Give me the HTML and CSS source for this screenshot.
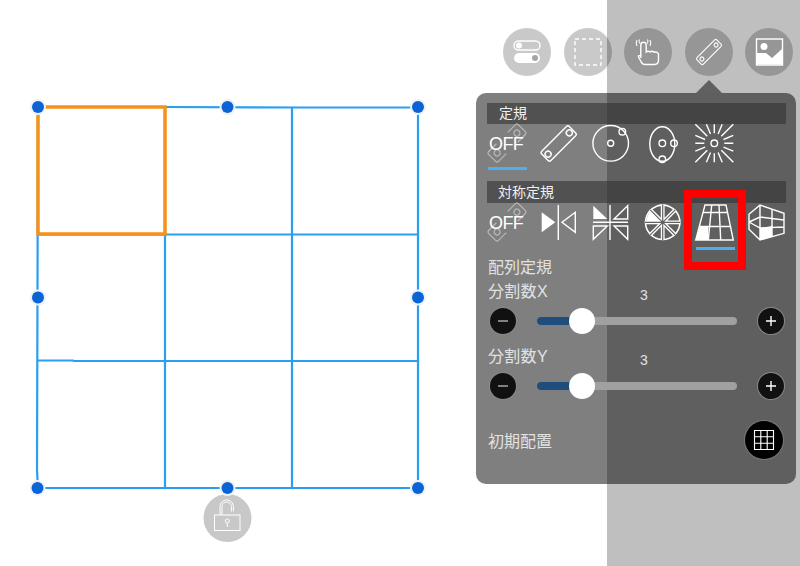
FILE: index.html
```html
<!DOCTYPE html>
<html lang="ja">
<head>
    <meta charset="UTF-8">
    <meta name="viewport" content="width=device-width, initial-scale=1.0">
    <title>対称定規</title>
    <link rel="stylesheet" href="styles.css">
</head>
<body>
    <div class="stage">
        <!-- 左: キャンバス -->
        <svg class="canvas" width="476" height="566" viewBox="0 0 476 566">
            <g class="grid">
                <path d="M38 107H165M165 107L302 107.500H418V488H38L37 470L38 107"/>
                <path d="M165 107V488M292 108V488"/>
                <path d="M38 234.500H418M38 360.500H73L74 361H418"/>
            </g>
            <rect class="cell-sel" x="38" y="107" width="127" height="127"/>
            <circle class="lock-btn" cx="227.500" cy="518" r="24"/>
            <g class="lock">
                <rect x="214.500" y="515" width="25.500" height="15.500"/>
                <path d="M220 515V506.500a6.700 6.500 0 0 1 13.400 0V511.500M222 515V506.500a4.700 4.500 0 0 1 9.400 0V511.500"/>
                <circle cx="227.300" cy="521" r="2"/>
                <path d="M227.300 523V527"/>
            </g>
            <g class="handles">
                <circle cx="38" cy="107" r="6"/>
                <circle cx="227.500" cy="107" r="6"/>
                <circle cx="418" cy="107" r="6"/>
                <circle cx="38" cy="297.500" r="6"/>
                <circle cx="418" cy="297.500" r="6"/>
                <circle cx="37.500" cy="488" r="6"/>
                <circle cx="227.500" cy="488" r="6"/>
                <circle cx="418" cy="488" r="6"/>
            </g>
        </svg>

        <!-- 右: ツールとパネル -->
        <div class="side">
            <div class="tools">
                <div class="tool">
                    <svg width="48" height="48" viewBox="0 0 48 48">
                        <rect class="ln" x="11" y="13" width="26" height="9" rx="4.500"/>
                        <circle class="wh" cx="16" cy="17.500" r="3"/>
                        <rect class="wh" x="11" y="25" width="26" height="10" rx="5"/>
                        <circle class="dim" cx="32" cy="30" r="3"/>
                    </svg>
                </div>
                <div class="tool">
                    <svg width="48" height="48" viewBox="0 0 48 48">
                        <rect class="ln dash" x="11" y="11" width="26" height="26"/>
                    </svg>
                </div>
                <div class="tool">
                    <svg width="48" height="48" viewBox="0 0 48 48">
                        <path class="ln" d="M16.800 30V17a2.700 2.700 0 0 1 5.400 0V24q2-1.500 4 0q2-1.500 4 .3q2.500-1 4.300 1.500V32q0 4.500-4 4.500H21q-3 0-4-3L14.500 29q-.5-2 2.300-1"/>
                        <path class="ln thin" d="M13 12q-1.500 3 0 6M15.500 11.500q-1 2 0 4M26 12q1.500 3 0 6M23.500 11.500q1 2 0 4"/>
                    </svg>
                </div>
                <div class="tool">
                    <svg width="48" height="48" viewBox="0 0 48 48">
                        <g transform="rotate(-45 24 24)">
                            <rect class="ln thin" x="10" y="19.500" width="28" height="9" rx="1.500"/>
                            <circle class="ln thin" cx="14" cy="24" r="2"/>
                            <circle class="ln thin" cx="34" cy="24" r="2"/>
                        </g>
                    </svg>
                </div>
                <div class="tool">
                    <svg width="48" height="48" viewBox="0 0 48 48">
                        <rect class="ln" x="11.500" y="11" width="26" height="26"/>
                        <circle class="wh" cx="19" cy="18.500" r="3.500"/>
                        <path class="wh" d="M12 25H21L27 30L37 21V36.500H12Z"/>
                    </svg>
                </div>
            </div>

            <div class="panel">
                <div class="head">定規</div>
                <div class="icons">
                    <div class="cell">
                        <svg class="icon" width="52" height="42" viewBox="481 125 52 42">
                            <g class="ghost" transform="translate(507 143) rotate(-45)">
                                <path d="M8-7H19a2 2 0 0 1 2 2V5a2 2 0 0 1-2 2H8M-8 7H-19a2 2 0 0 1-2-2V-5a2 2 0 0 1 2-2H-8"/>
                                <circle cx="14" cy="0" r="3"/>
                                <circle cx="-14" cy="0" r="3"/>
                            </g>
                            <text class="off" x="489" y="150">OFF</text>
                        </svg>
                        <i class="under"></i>
                    </div>
                    <div class="cell">
                        <svg class="icon" width="52" height="42" viewBox="533 125 52 42">
                            <g transform="rotate(-45 558.700 143.500)">
                                <rect class="ln" x="539.200" y="137" width="39" height="13" rx="2"/>
                                <circle class="ln" cx="543.700" cy="143.500" r="3"/>
                                <circle class="ln" cx="573.700" cy="143.500" r="3"/>
                            </g>
                        </svg>
                    </div>
                    <div class="cell">
                        <svg class="icon" width="52" height="42" viewBox="585 125 52 42">
                            <circle class="ln" cx="610.700" cy="143.300" r="17.800"/>
                            <circle class="ln" cx="610.700" cy="143.300" r="3"/>
                            <circle class="ln" cx="622.300" cy="131.700" r="3.300"/>
                        </svg>
                    </div>
                    <div class="cell">
                        <svg class="icon" width="52" height="42" viewBox="637 125 52 42">
                            <ellipse class="ln" cx="662.300" cy="144" rx="12.500" ry="17.300"/>
                            <circle class="ln" cx="662.300" cy="143.300" r="3.300"/>
                            <circle class="ln" cx="674" cy="143.300" r="3.300"/>
                            <circle class="ln" cx="662.300" cy="159.300" r="3.300"/>
                        </svg>
                    </div>
                    <div class="cell">
                        <svg class="icon" width="52" height="42" viewBox="689 125 52 42">
                            <circle class="ln" cx="714.300" cy="143.300" r="3.300"/>
                            <g class="ln" transform="translate(714.300 143.300)">
                                <path d="M10 0H19M-10 0H-19M0 10V19M0-10V-19"/>
                                <path d="M7 7L19 19M-7 7L-19 19M7-7L19-19M-7-7L-19-19"/>
                                <path d="M9.200 3.800L19 7.900M-9.200 3.800L-19 7.900M9.200-3.800L19-7.900M-9.200-3.800L-19-7.900"/>
                                <path d="M3.800 9.200L7.900 19M-3.800 9.200L-7.900 19M3.800-9.200L7.900-19M-3.800-9.200L-7.900-19"/>
                            </g>
                        </svg>
                    </div>
                </div>

                <div class="head head2">対称定規</div>
                <div class="icons icons2">
                    <div class="cell">
                        <svg class="icon" width="52" height="44" viewBox="481 203 52 44">
                            <g class="ghost" transform="translate(507 222) rotate(-45)">
                                <path d="M8-7H19a2 2 0 0 1 2 2V5a2 2 0 0 1-2 2H8M-8 7H-19a2 2 0 0 1-2-2V-5a2 2 0 0 1 2-2H-8"/>
                                <circle cx="14" cy="0" r="3"/>
                                <circle cx="-14" cy="0" r="3"/>
                            </g>
                            <text class="off" x="489" y="229">OFF</text>
                        </svg>
                    </div>
                    <div class="cell">
                        <svg class="icon" width="52" height="44" viewBox="533 203 52 44">
                            <path class="wh" d="M541.700 212.300V232.300L555.300 222.300Z"/>
                            <path class="ln" d="M558.300 205V240M575.300 212.300V232.300L562 222.300Z"/>
                        </svg>
                    </div>
                    <div class="cell">
                        <svg class="icon" width="52" height="44" viewBox="585 203 52 44">
                            <path class="wh" d="M593.300 205.700V219H607.300Z"/>
                            <path class="ln" d="M610 205V240M593 222.300H628M627.700 205.700V219H614ZM593.300 226V239.300L607.300 226ZM627.700 226V239.300L614 226Z"/>
                        </svg>
                    </div>
                    <div class="cell">
                        <svg class="icon" width="52" height="44" viewBox="637 203 52 44">
                            <circle class="wh" cx="662.700" cy="222.300" r="18"/>
                            <circle class="hole" cx="662.700" cy="222.300" r="16.400"/>
                            <path class="wh" d="M662.700 222.300H646.300A16.400 16.400 0 0 1 651.100 210.700Z"/>
                            <path class="spoke" d="M645 222.300H680.400M662.700 204.600V240M650.200 209.800L675.200 234.800M650.200 234.800L675.200 209.800"/>
                            <path class="spoke-in" d="M645 222.300H680.400M662.700 204.600V240M650.200 209.800L675.200 234.800M650.200 234.800L675.200 209.800"/>
                        </svg>
                    </div>
                    <div class="cell">
                        <svg class="icon" width="52" height="44" viewBox="689 203 52 44">
                            <path class="wh" d="M699.900 226.500H708.300V240H695.700Z"/>
                            <path class="ln" d="M705 205H726L733.300 240H695.700ZM711.700 205L708.300 240M719 205L720.700 240M703 212.500H728M699.900 226.500H731"/>
                        </svg>
                        <i class="under"></i>
                        <div class="mark"></div>
                    </div>
                    <div class="cell">
                        <svg class="icon" width="52" height="44" viewBox="741 203 52 44">
                            <path class="wh" d="M760 228L772 226V236.500L760 240Z"/>
                            <path class="ln" d="M749 214.300L760 205L784 213.300V233.300L760 240L749 229.300ZM760 205V240M772 209.500V236.500M749 222L760 217L784 220M749 222L760 228L784 227"/>
                        </svg>
                    </div>
                </div>

                <div class="sect">配列定規</div>

                <div class="label">
                    <span class="name">分割数X</span>
                    <span class="val">3</span>
                </div>
                <div class="slider">
                    <div class="round">
                        <svg width="26" height="26" viewBox="0 0 26 26"><path class="ln minus" d="M8 13H18"/></svg>
                    </div>
                    <div class="track">
                        <div class="fill" style="width: 45px"><i class="knob"></i></div>
                    </div>
                    <div class="round">
                        <svg width="26" height="26" viewBox="0 0 26 26"><path class="ln" d="M8 13H18M13 8V18"/></svg>
                    </div>
                </div>

                <div class="label label2">
                    <span class="name">分割数Y</span>
                    <span class="val">3</span>
                </div>
                <div class="slider">
                    <div class="round">
                        <svg width="26" height="26" viewBox="0 0 26 26"><path class="ln minus" d="M8 13H18"/></svg>
                    </div>
                    <div class="track">
                        <div class="fill" style="width: 45px"><i class="knob"></i></div>
                    </div>
                    <div class="round">
                        <svg width="26" height="26" viewBox="0 0 26 26"><path class="ln" d="M8 13H18M13 8V18"/></svg>
                    </div>
                </div>

                <div class="init">
                    <span class="init-name">初期配置</span>
                    <div class="init-btn">
                        <svg width="38" height="38" viewBox="0 0 38 38">
                            <path class="ln thin" d="M9.500 9.500H28.500V28.500H9.500ZM9.500 15.800H28.500M9.500 22.200H28.500M15.800 9.500V28.500M22.200 9.500V28.500"/>
                        </svg>
                    </div>
                </div>
            </div>
        </div>
    </div>
</body>
</html>
```

FILE: styles.css
```css
* {
    margin: 0;
    padding: 0;
    box-sizing: border-box;
}
html, body {
    width: 800px;
    height: 566px;
    overflow: hidden;
}
body {
    font-family: "Liberation Sans", "Noto Sans CJK JP", sans-serif;
}
.stage {
    display: flex;
    width: 800px;
    height: 566px;
    background: linear-gradient(90deg, #fff 607px, #bfbfbf 607px);
}
.canvas {
    display: block;
    flex: none;
}
.grid path {
    fill: none;
    stroke: #2a9ff0;
    stroke-width: 2.2;
}
.cell-sel {
    fill: none;
    stroke: #f6911a;
    stroke-width: 3.5;
}
.handles circle {
    fill: #0a64d6;
    stroke: #eef2f6;
    stroke-width: 4;
    paint-order: stroke;
}
.lock-btn {
    fill: #c8c8c8;
}
.lock rect, .lock path, .lock circle {
    fill: none;
    stroke: #fff;
    stroke-width: 1;
}

.side {
    width: 320px;
    flex: none;
}
.tools {
    display: flex;
    gap: 12.5px;
    margin: 28px 0 17px 27px;
}
.tool {
    width: 48px;
    height: 48px;
    border-radius: 50%;
    background-color: rgba(0, 0, 0, 0.21);
}
.tool svg, .round svg, .init-btn svg {
    display: block;
}
.ln {
    fill: none;
    stroke: #fff;
    stroke-width: 1.4;
}
.thin {
    stroke-width: 1.1;
}
.minus {
    stroke: #b0b0b0;
}
.dash {
    stroke-dasharray: 4 3;
}
.wh {
    fill: #fff;
}
.dim {
    fill: #a5a5a5;
}

.panel {
    position: relative;
    height: 391px;
    padding-top: 10px;
    border-radius: 10px;
    background-color: rgba(0, 0, 0, 0.5);
    color: #e2e2e2;
}
.panel::before {
    content: "";
    position: absolute;
    left: 220px;
    top: -13px;
    border-left: 13px solid transparent;
    border-right: 13px solid transparent;
    border-bottom: 13px solid #606060;
}
.head {
    height: 21px;
    margin: 0 10px 0 11px;
    padding-left: 12px;
    font-size: 14px;
    line-height: 21px;
    color: #f0f0f0;
    background-color: rgba(50, 50, 50, 0.6);
}
.head2 {
    height: 22px;
    margin-top: 11px;
    padding-left: 11px;
    line-height: 22px;
}
.icons {
    display: flex;
    height: 45px;
    margin-top: 1px;
    padding-left: 5px;
}
.icons2 {
    height: 47px;
    margin-top: 0;
}
.cell {
    position: relative;
    width: 52px;
    flex: none;
}
.icon {
    display: block;
    overflow: visible;
}
.under {
    display: block;
    width: 39px;
    height: 3px;
    margin: 0 auto;
    background-color: #50aef0;
}
.mark {
    position: absolute;
    left: -5px;
    top: -13px;
    width: 62px;
    height: 80px;
    border: 8px solid #f00;
}
.off {
    font-size: 18px;
    letter-spacing: -0.6px;
    fill: #fff;
}
.ghost path, .ghost circle {
    fill: none;
    stroke: #fff;
    stroke-width: 1.2;
    stroke-opacity: 0.45;
}
.hole {
    fill: #606060;
}
.spoke {
    fill: none;
    stroke: #fff;
    stroke-width: 3.8;
}
.spoke-in {
    fill: none;
    stroke: #606060;
    stroke-width: 1.2;
}

.sect {
    height: 22px;
    margin: 6px 0 0 12px;
    font-size: 16px;
    line-height: 24px;
}
.label {
    display: flex;
    height: 22px;
    margin: 2px 0 0 12px;
    font-size: 16px;
    line-height: 24px;
}
.label2 {
    margin-top: 11px;
}
.name {
    width: 152px;
    letter-spacing: 0.3px;
}
.val {
    margin-top: 3px;
    font-size: 14px;
}
.slider {
    display: flex;
    align-items: center;
    gap: 21px;
    margin-top: 6px;
    padding: 0 12px 0 14px;
}
.round {
    width: 26px;
    height: 26px;
    flex: none;
    border-radius: 50%;
    background-color: #111;
    box-shadow: 0 0 0 1px #888;
}
.track {
    flex: 1;
    height: 8px;
    border-radius: 4px;
    background-color: #a0a0a0;
}
.fill {
    position: relative;
    height: 8px;
    border-radius: 4px 0 0 4px;
    background-color: #1f4e7e;
}
.knob {
    position: absolute;
    right: -13px;
    top: -9px;
    width: 26px;
    height: 26px;
    border-radius: 50%;
    background-color: #fff;
}
.init {
    display: flex;
    align-items: center;
    justify-content: space-between;
    margin-top: 22px;
    padding: 0 13px 0 12px;
}
.init-name {
    font-size: 16px;
}
.init-btn {
    width: 38px;
    height: 38px;
    border-radius: 50%;
    background-color: #000;
    box-shadow: 0 0 0 1px #777;
}
```
